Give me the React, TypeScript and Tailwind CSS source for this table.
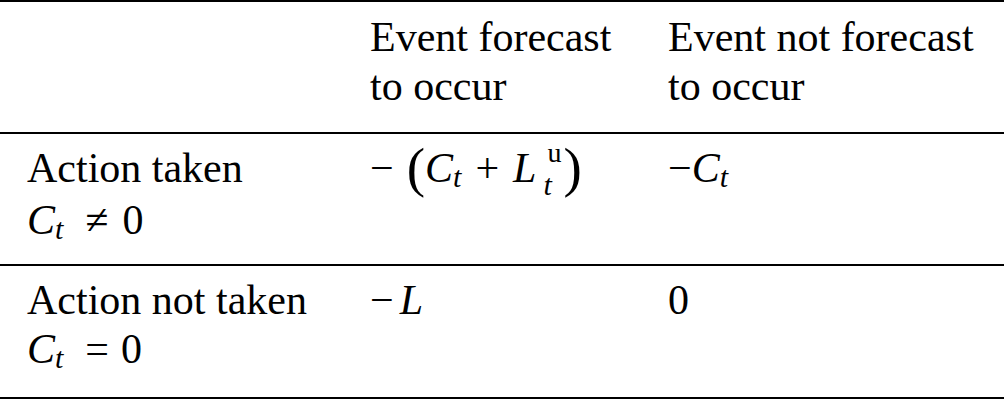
import React from "react";

const Sub = ({ children }: { children: React.ReactNode }) => (
  <span className="text-[30px] italic leading-[0] align-[-5px]">{children}</span>
);

const Ct = () => (
  <span className="whitespace-nowrap">
    <span className="italic">C</span>
    <Sub>t</Sub>
  </span>
);

export default function App() {
  return (
    <div className="w-[1004px] h-[400px] bg-white text-black [font-family:Liberation_Serif,Times_New_Roman,serif] text-[42px] leading-[49px]">
      {/* header */}
      <div className="grid grid-cols-[370px_298px_1fr] border-t-2 border-black pt-[11px] pb-[21px]">
        <div />
        <div>
          <div>Event forecast</div>
          <div>to occur</div>
        </div>
        <div>
          <div>Event not forecast</div>
          <div>to occur</div>
        </div>
      </div>

      {/* row 1 */}
      <div className="grid grid-cols-[370px_298px_1fr] border-t-2 border-black pt-[10px] pb-[19px]">
        <div className="pl-[27px]">
          <div>Action taken</div>
          <div className="mt-[3px] whitespace-nowrap">
            <Ct />
            <span className="ml-[22px]">≠</span>
            <span className="ml-[14px]">0</span>
          </div>
        </div>
        <div className="whitespace-nowrap">
          <span>−</span>
          <span className="ml-[13px] text-[55px] leading-[0] align-[-4px]">(</span>
          <Ct />
          <span className="ml-[14px]">+</span>
          <span className="ml-[14px] italic">L</span>
          <span className="inline-flex flex-col items-start align-[20px] my-[-14px] ml-[7px]">
            <span className="text-[28px] leading-[32px] not-italic ml-[4px]">u</span>
            <span className="text-[30px] leading-[32px] italic">t</span>
          </span>
          <span className="ml-[2px] text-[55px] leading-[0] align-[-4px]">)</span>
        </div>
        <div className="whitespace-nowrap">
          <span>−</span>
          <Ct />
        </div>
      </div>

      {/* row 2 */}
      <div className="grid grid-cols-[370px_298px_1fr] border-t-2 border-b-2 border-black pt-[10px] pb-[23px]">
        <div className="pl-[27px]">
          <div>Action not taken</div>
          <div className="whitespace-nowrap">
            <Ct />
            <span className="ml-[22px]">=</span>
            <span className="ml-[12px]">0</span>
          </div>
        </div>
        <div className="whitespace-nowrap">
          <span>−</span>
          <span className="ml-[6px] italic">L</span>
        </div>
        <div>0</div>
      </div>
    </div>
  );
}
